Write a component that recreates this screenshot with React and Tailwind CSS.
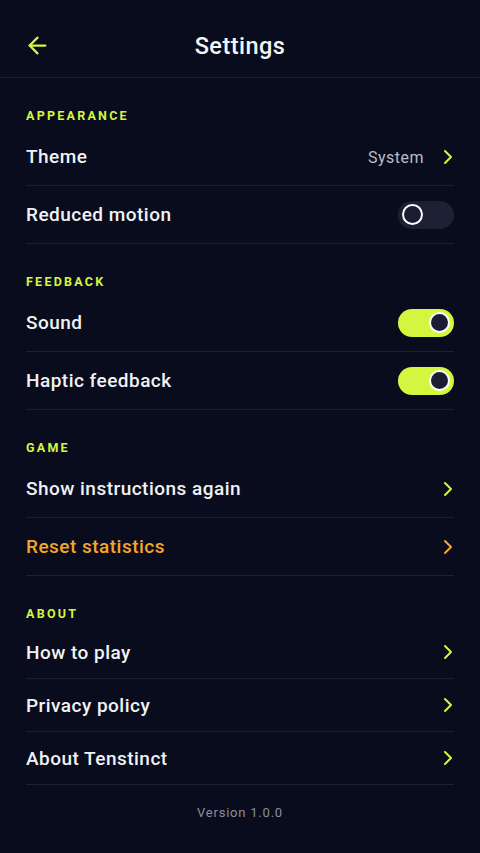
import { ArrowLeft, ChevronRight } from 'lucide-react'

const font = { fontFamily: 'Roboto, "Noto Sans", sans-serif' }

function Toggle({ on }) {
  return (
    <div
      className={`w-[56px] h-[28px] rounded-full flex items-center px-[4px] ${
        on ? 'bg-[#d6f53f] justify-end' : 'bg-[#1c2032] justify-start'
      }`}
    >
      <div className="w-[21px] h-[21px] rounded-full border-2 border-white bg-[#1a1d33]" />
    </div>
  )
}

function Row({ label, right, h = 'h-[58px]', color = 'text-[#f1f2f5]' }) {
  return (
    <div className={`${h} flex items-center justify-between border-b border-[#1b1f31]`}>
      <span className={`text-[19px] font-medium tracking-[0.025em] pt-[2px] ${color}`}>{label}</span>
      {right}
    </div>
  )
}

function Chevron({ color = 'text-[#d6f53f]' }) {
  return <ChevronRight size={24} strokeWidth={2} className={`${color} -mr-[6px]`} />
}

function Section({ title, children }) {
  return (
    <div className="pt-[30px]">
      <div className="text-[12.5px] font-bold tracking-[0.18em] text-[#d6f53f] leading-[16px] mb-[4px]">
        {title}
      </div>
      {children}
    </div>
  )
}

export default function App() {
  return (
    <div className="min-h-[853px] bg-[#090c1d] text-white" style={font}>
      <div className="h-[78px] border-b border-[#1b1f31] flex items-center relative px-[24px] pt-[14px]">
        <ArrowLeft size={27} strokeWidth={2} className="text-[#d6f53f]" />
        <div className="absolute inset-x-0 top-[31px] text-center text-[23.5px] font-medium tracking-[0.02em] leading-[30px] text-[#f4f5f7]">
          Settings
        </div>
      </div>

      <div className="px-[26px]">
        <Section title="APPEARANCE">
          <Row
            label="Theme"
            right={
              <div className="flex items-center gap-[12px]">
                <span className="text-[16px] text-[#b9bdc9] tracking-[0.03em] pt-[2px]">System</span>
                <Chevron />
              </div>
            }
          />
          <Row label="Reduced motion" right={<Toggle on={false} />} />
        </Section>

        <Section title="FEEDBACK">
          <Row label="Sound" right={<Toggle on />} />
          <Row label="Haptic feedback" right={<Toggle on />} />
        </Section>

        <Section title="GAME">
          <Row label="Show instructions again" right={<Chevron />} />
          <Row
            label="Reset statistics"
            color="text-[#f5a62a]"
            right={<Chevron color="text-[#f5a62a]" />}
          />
        </Section>

        <Section title="ABOUT">
          <Row label="How to play" h="h-[53px]" right={<Chevron />} />
          <Row label="Privacy policy" h="h-[53px]" right={<Chevron />} />
          <Row label="About Tenstinct" h="h-[53px]" right={<Chevron />} />
        </Section>

        <div className="pt-[20px] text-center text-[13px] tracking-[0.06em] text-[#8a8f9d] leading-[16px]">
          Version 1.0.0
        </div>
      </div>
    </div>
  )
}
